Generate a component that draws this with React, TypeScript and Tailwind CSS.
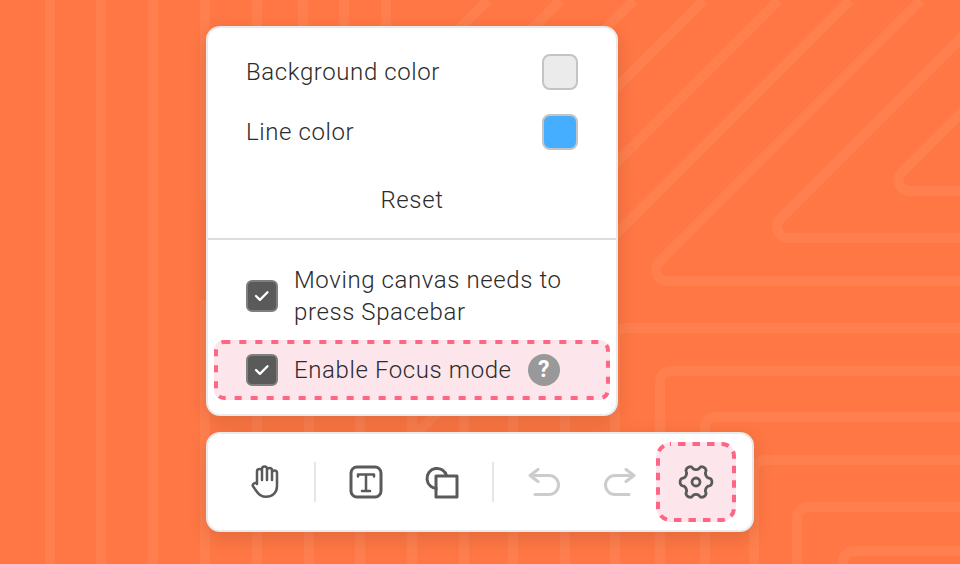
const fontStack = { fontFamily: 'Roboto, sans-serif' };

// wavy six lobed outline for the settings cog
const gearPath =
  Array.from({ length: 144 }, (_, i) => {
    const t = (i / 144) * Math.PI * 2;
    const c = Math.cos(6 * t);
    const r = 13.8 + 2.1 * Math.sign(c) * Math.pow(Math.abs(c), 0.5);
    return `${i === 0 ? 'M' : 'L'}${(18 + r * Math.cos(t)).toFixed(2)} ${(18 + 1.06 * r * Math.sin(t)).toFixed(2)}`;
  }).join('') + 'Z';

function Backdrop() {
  return (
    <svg className="absolute inset-0" width="960" height="564" viewBox="0 0 960 564" fill="none" stroke="#ff7f4e" strokeWidth="10">
      {/* left columns */}
      {[50, 101, 153].map((x) => (
        <path key={x} d={`M${x} 0V564`} />
      ))}
      {/* behind the panels, top */}
      {[205, 257, 303, 344, 386].map((x) => (
        <path key={x} d={`M${x} 0V200`} />
      ))}
      {/* behind the panels, bottom */}
      {[205, 257, 309, 360, 412, 464, 513, 565].map((x) => (
        <path key={x} d={`M${x} 300V564`} />
      ))}
      {/* diagonals running to the top edge */}
      {[488, 561, 634, 704, 779, 850].map((s) => (
        <path key={s} d={`M${s} 0L${400} ${s - 400}`} />
      ))}
      {/* diagonals that turn into horizontals */}
      <path d="M921.400 0L659.200 262.200A11 11 0 0 0 667 281H960" />
      <path d="M999.400 0L780.200 219.200A11 11 0 0 0 788 238H960" />
      <path d="M1073.900 0L901.700 172.200A11 11 0 0 0 909.500 191H960" />
      {/* bottom right corners */}
      <path d="M615 564V340Q615 328 627 328H960" />
      <path d="M660 564V383Q660 371 672 371H960" />
      <path d="M705 564V429Q705 417 717 417H960" />
      <path d="M754 564V472Q754 460 766 460H960" />
      <path d="M797 564V519Q797 507 809 507H960" />
      <path d="M843 575V563Q843 551 855 551H960" />
    </svg>
  );
}

function Swatch({ fill }: { fill: string }) {
  return <div className={`w-9 h-9 rounded-lg border-2 border-[#c4c4c4] ${fill}`} />;
}

function Check() {
  return (
    <div className="w-8 h-8 shrink-0 rounded-md bg-[#5a5a5a] border-2 border-[#7f7f7f] flex items-center justify-center">
      <svg width="16" height="12" viewBox="0 0 16 12" fill="none" stroke="#fff" strokeWidth="2.300" strokeLinecap="round" strokeLinejoin="round">
        <path d="M2 6l3.900 3.900 7.600-7.600" />
      </svg>
    </div>
  );
}

function Divider() {
  return <div className="w-0.5 h-10 mx-3 bg-[#e6e6e6]" />;
}

export default function App() {
  return (
    <div className="relative w-[960px] h-[564px] overflow-hidden bg-[#ff7744]" style={fontStack}>
      <Backdrop />
      <div className="relative pl-[206px] pt-[26px] flex flex-col gap-4 items-start text-[#2b2b2b] font-light text-2xl tracking-[0.6px]">
        {/* settings panel */}
        <div className="w-[412px] h-[390px] bg-white rounded-[14px] border-2 border-[#e9e9e9] shadow-[0_6px_20px_rgba(0,0,0,0.12)]">
          <div className="px-[38px] pt-[26px] flex flex-col gap-6">
            <div className="flex items-center justify-between h-9">
              <span>Background color</span>
              <Swatch fill="bg-[#ebebeb]" />
            </div>
            <div className="flex items-center justify-between h-9">
              <span>Line color</span>
              <Swatch fill="bg-[#45aeff]" />
            </div>
          </div>
          <div className="mt-[34px] h-8 leading-8 text-center">Reset</div>
          <div className="mt-[22px] h-0.5 bg-[#dddddd]" />
          <div className="mt-6 pl-[38px] pr-4 flex items-center gap-4">
            <Check />
            <span className="leading-8">Moving canvas needs to press Spacebar</span>
          </div>
          <div className="relative mt-3 mx-1.5 h-[60px] pl-8 rounded-[10px] bg-[#fde5ec] flex items-center">
            <svg className="absolute inset-0" width="396" height="60" fill="none" stroke="#ff6685" strokeWidth="4">
              <rect x="2" y="2" width="392" height="56" rx="8" strokeDasharray="7 9" strokeDashoffset="0.7" />
            </svg>
            <Check />
            <span className="relative ml-4">Enable Focus mode</span>
            <span className="relative ml-4 w-8 h-8 rounded-full bg-[#999999] text-white font-bold text-[23px] tracking-normal flex items-center justify-center">?</span>
          </div>
        </div>

        {/* toolbar */}
        <div className="w-[548px] h-[100px] pl-[18px] bg-white rounded-[14px] border-2 border-[#e9e9e9] shadow-[0_6px_20px_rgba(0,0,0,0.12)] flex items-center">
          <div className="w-[76px] h-20 flex items-center justify-center">
            <svg width="32" height="36" viewBox="-2 0 32 36" fill="none" stroke="#5a5a5a" strokeWidth="2.500" strokeLinecap="round" strokeLinejoin="round">
              <path d="M7 20V7.500a2.500 2.500 0 0 1 5 0V16M12 16V5a2.500 2.500 0 0 1 5 0V16M17 16V6.500a2.500 2.500 0 0 1 5 0V16M22 16V9a2.500 2.500 0 0 1 5 0V22c0 6.500-4.500 10.800-11 10.800-5 0-7.500-2.500-9.500-5.500l-3.500-5c-1-1.800 1.500-4.500 4-2.800L7 20" />
            </svg>
          </div>
          <Divider />
          <div className="w-[76px] h-20 flex items-center justify-center">
            <svg width="34" height="34" viewBox="0 0 34 34" fill="none" stroke="#5a5a5a" strokeWidth="3" strokeLinecap="round" strokeLinejoin="round">
              <rect x="2" y="2" width="30" height="30" rx="6" />
              <path strokeWidth="2.500" d="M9 11.500V9.500H25V11.500M17 9.500V26M13 26H21" />
            </svg>
          </div>
          <div className="w-[76px] h-20 flex items-center justify-center">
            <svg width="34" height="34" viewBox="0 0 34 34" fill="none" stroke="#5a5a5a" strokeWidth="3" strokeLinejoin="round">
              <path d="M12.500 23.400A10 10 0 1 1 21.700 11" />
              <rect x="11" y="11" width="21" height="21" />
            </svg>
          </div>
          <Divider />
          <div className="w-[76px] h-20 flex items-center justify-center">
            <svg width="32" height="28" viewBox="0 0 32 28" fill="none" stroke="#cccccc" strokeWidth="3" strokeLinecap="round" strokeLinejoin="round">
              <path d="M10 1.500L2 7.500L10 13.500M2 7.500H21a8.500 8.500 0 0 1 0 19H7" />
            </svg>
          </div>
          <div className="w-[76px] h-20 flex items-center justify-center">
            <svg width="32" height="28" viewBox="0 0 32 28" fill="none" stroke="#cccccc" strokeWidth="3" strokeLinecap="round" strokeLinejoin="round">
              <path d="M22 1.500L30 7.500L22 13.500M30 7.500H11a8.500 8.500 0 0 0 0 19H25" />
            </svg>
          </div>
          <div className="relative -ml-0.5 w-20 h-20 rounded-2xl bg-[#fde5ec] flex items-center justify-center">
            <svg className="absolute inset-0" width="80" height="80" fill="none" stroke="#ff6685" strokeWidth="4">
              <rect x="2" y="2" width="76" height="76" rx="12" strokeDasharray="7.500 7" strokeDashoffset="6.500" />
            </svg>
            <svg className="relative" width="36" height="36" viewBox="0 0 36 36" fill="none" stroke="#5a5a5a" strokeWidth="2.800" strokeLinejoin="round">
              <path d={gearPath} />
              <circle cx="18" cy="18" r="4" />
            </svg>
          </div>
        </div>
      </div>
    </div>
  );
}
